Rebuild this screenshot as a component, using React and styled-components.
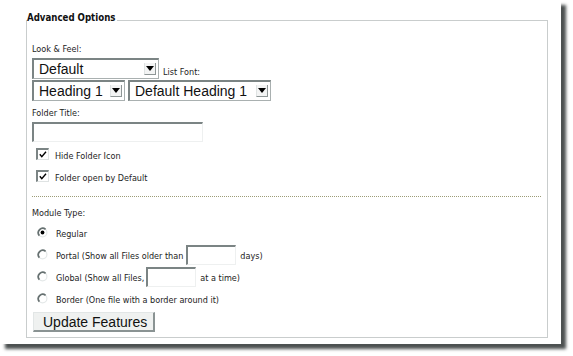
import styled, { createGlobalStyle } from "styled-components";

const Global = createGlobalStyle`
	html, body {
		margin: 0;
		background: #fff;
		overflow: hidden;
	}
	* {
		box-sizing: border-box;
	}
`;

const Page = styled.div`
	width: 573px;
	height: 356px;
	background: #fff;
`;

const Sheet = styled.div`
	width: 561px;
	height: 344px;
	background: #fff;
	box-shadow: 5px 5px 3px rgba(45, 50, 50, 0.85);
	padding-top: 12px;
	font-family: "DejaVu Sans Condensed", "DejaVu Sans", sans-serif;
	font-size: 9px;
	color: #1c1c1c;
`;

const Fieldset = styled.fieldset`
	margin: 0 0 0 26px;
	width: 522px;
	padding: 0 6px 5px 5px;
	border: 1px solid #c9cdcd;
	min-width: 0;
`;

const Legend = styled.legend`
	padding: 0 2px 4px 0;
	margin-left: -5px;
	font-family: "DejaVu Sans Condensed", "DejaVu Sans", sans-serif;
	font-weight: 700;
	font-size: 9.6px;
	line-height: 12px;
	color: #111;
`;

const Label = styled.div`
	line-height: 12px;
	margin-top: ${(p) => p.$top || 0}px;
`;

const Row = styled.div`
	display: flex;
	align-items: flex-end;
	gap: ${(p) => p.$gap || 0}px;
	margin-top: ${(p) => p.$top || 0}px;
`;

const SideLabel = styled.span`
	line-height: 12px;
	margin: 0 0 1px 4px;
`;

const Select = styled.div`
	display: flex;
	align-items: center;
	justify-content: space-between;
	width: ${(p) => p.$width}px;
	height: 21px;
	padding: 0 2px 0 5px;
	background: #fff;
	border-top: 2px solid #7b8484;
	border-left: 2px solid #7b8484;
	border-right: 1px solid #a9b0b0;
	border-bottom: 1px solid #a9b0b0;
	font-family: "Liberation Sans", Arial, sans-serif;
	font-size: 14px;
	color: #111;
	white-space: nowrap;
`;

const Arrow = styled.span`
	display: flex;
	align-items: center;
	justify-content: center;
	width: 12px;
	height: 12px;
	background: #f3f4f4;
	border-left: 1px solid #dfe3e3;
	border-right: 1px solid #8e9696;
	border-bottom: 1px solid #8e9696;

	&::after {
		content: "";
		border-left: 4px solid transparent;
		border-right: 4px solid transparent;
		border-top: 5px solid #000;
	}
`;

const TextInput = styled.div`
	width: ${(p) => p.$width}px;
	height: 20px;
	margin-top: ${(p) => p.$top || 0}px;
	background: #fff;
	border-top: 2px solid #7b8484;
	border-left: 2px solid #7b8484;
	border-right: 1px solid #eef0f0;
	border-bottom: 1px solid #eef0f0;
	flex-shrink: 0;
`;

const CheckRow = styled.label`
	display: flex;
	align-items: flex-end;
	gap: 6px;
	height: 13px;
	margin: ${(p) => p.$top}px 0 0 4px;
	line-height: 11px;
`;

const CheckText = styled.span`
	margin-bottom: -2px;
`;

const CheckBox = styled.span`
	display: flex;
	width: 13px;
	height: 12px;
	padding: 1px 0 0 1px;
	background: #fff;
	border-top: 2px solid #7b8484;
	border-left: 2px solid #7b8484;
	border-right: 1px solid #dfe3e3;
	border-bottom: 1px solid #dfe3e3;
`;

const Divider = styled.div`
	margin-top: 14px;
	border-top: 1px dotted #9c9c78;
`;

const RadioRow = styled.label`
	display: flex;
	align-items: center;
	height: 22px;
	margin-left: 5px;
	margin-top: ${(p) => p.$top || 0}px;
`;

const RadioMark = styled.svg`
	align-self: flex-start;
	margin: 4px 8px 0 0;
	flex-shrink: 0;
`;

const InlineInput = styled(TextInput)`
	align-self: flex-start;
	margin: 0 4px 0 ${(p) => p.$left || 3}px;
`;

const Button = styled.button`
	display: block;
	margin: 1px 0 0 1px;
	width: 122px;
	height: 20px;
	padding: 0 0 0 9px;
	text-align: left;
	background: #eff1f0;
	border-top: 1px solid #e2e6e6;
	border-left: 1px solid #e2e6e6;
	border-right: 2px solid #8a9393;
	border-bottom: 2px solid #8a9393;
	font-family: "Liberation Sans", Arial, sans-serif;
	font-size: 14px;
	line-height: 16px;
	color: #111;
`;

function Check() {
	return (
		<CheckBox>
			<svg width="8" height="7" viewBox="0 0 8 7">
				<polyline points="0.8,3.2 2.8,5.6 7,0.8" fill="none" stroke="#000" strokeWidth="1.4" />
			</svg>
		</CheckBox>
	);
}

function Radio({checked}) {
	return (
		<RadioMark width="11" height="11" viewBox="0 0 11 11">
			<circle cx="5.5" cy="5.5" r="4.4" fill="#fff" stroke="#e4e8e8" strokeWidth="1.2" />
			<path d="M2.4 8.6 A4.4 4.4 0 0 1 8.6 2.4" fill="none" stroke="#667070" strokeWidth="1.7" />
			{checked && <circle cx="5.5" cy="5.5" r="1.9" fill="#000" />}
		</RadioMark>
	);
}

export default function App() {
	return (
		<Page>
			<Global />
			<Sheet>
				<Fieldset>
					<Legend>Advanced Options</Legend>
					<Label $top={15}>Look &amp; Feel:</Label>
					<Row $top={3}>
						<Select $width={127}>
							Default
							<Arrow />
						</Select>
						<SideLabel>List Font:</SideLabel>
					</Row>
					<Row $top={1} $gap={3}>
						<Select $width={93}>
							Heading 1
							<Arrow />
						</Select>
						<Select $width={143}>
							Default Heading 1
							<Arrow />
						</Select>
					</Row>
					<Label $top={6}>Folder Title:</Label>
					<TextInput $width={171} $top={3} />
					<CheckRow $top={5}>
						<Check />
						<CheckText>Hide Folder Icon</CheckText>
					</CheckRow>
					<CheckRow $top={9}>
						<Check />
						<CheckText>Folder open by Default</CheckText>
					</CheckRow>
					<Divider />
					<Label $top={10}>Module Type:</Label>
					<RadioRow $top={4}>
						<Radio checked />
						Regular
					</RadioRow>
					<RadioRow>
						<Radio />
						Portal (Show all Files older than
						<InlineInput $width={50} />
						days)
					</RadioRow>
					<RadioRow>
						<Radio />
						Global (Show all Files,
						<InlineInput $width={50} $left={2} />
						at a time)
					</RadioRow>
					<RadioRow>
						<Radio />
						Border (One file with a border around it)
					</RadioRow>
					<Button>Update Features</Button>
				</Fieldset>
			</Sheet>
		</Page>
	);
}
